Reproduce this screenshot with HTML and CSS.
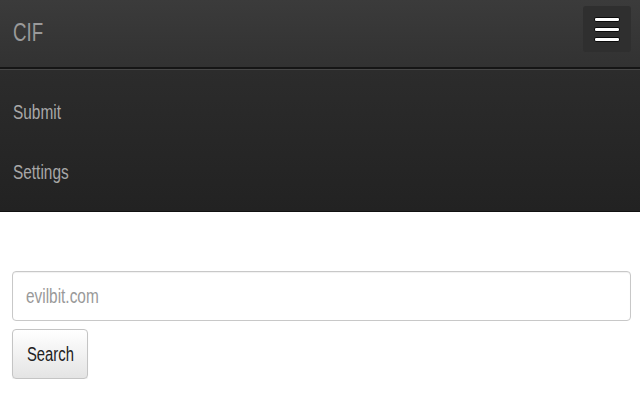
FILE: index.html
```html
<!DOCTYPE html>
<html>
<head>
<meta charset="utf-8">
<link rel="stylesheet" href="styles.css">
</head>
<body>
<header class="navbar">
  <div class="navbar-head">
    <a class="brand"><span class="squeeze">CIF</span></a>
    <button class="toggle" aria-label="menu">
      <span class="bar"></span><span class="bar"></span><span class="bar"></span>
    </button>
  </div>
  <nav class="menu">
    <a class="menu-item"><span class="squeeze">Submit</span></a>
    <a class="menu-item"><span class="squeeze">Settings</span></a>
  </nav>
</header>
<main class="content">
  <form class="search">
    <div class="field"><span class="placeholder squeeze">evilbit.com</span></div>
    <button type="button" class="btn"><span class="squeeze">Search</span></button>
  </form>
</main>
</body>
</html>
```
FILE: styles.css
```css
html, body {
  margin: 0;
  padding: 0;
  background: #fff;
  font-family: "Liberation Sans", Arial, sans-serif;
}
.squeeze {
  display: inline-block;
  transform: scaleX(0.77);
  transform-origin: left center;
  white-space: nowrap;
}
.navbar {
  display: flex;
  flex-direction: column;
}
.navbar-head {
  background: linear-gradient(#3b3b3b, #323232);
  border-bottom: 2px solid #151515;
  display: flex;
  align-items: flex-start;
  justify-content: space-between;
  box-sizing: border-box;
  height: 69px;
}
.brand {
  color: #9a9a9a;
  font-size: 26px;
  line-height: 26px;
  margin: 19px 0 0 13px;
}
.brand .squeeze {
  transform: scaleX(0.72);
}
.toggle {
  width: 48px;
  height: 46px;
  margin: 6px 9px 0 0;
  padding: 0;
  border: none;
  border-radius: 3px;
  background: #2f2f2f;
  display: flex;
  flex-direction: column;
  align-items: center;
  justify-content: center;
  gap: 5px;
}
.bar {
  display: block;
  width: 24px;
  height: 3px;
  background: #fff;
  border: 1px solid #0c0c0c;
  border-radius: 2px;
}
.menu {
  display: flex;
  flex-direction: column;
  background: linear-gradient(#2c2c2c, #222);
  border-top: 1px solid #474747;
  border-bottom: 1px solid #111;
  height: 143px;
  box-sizing: border-box;
  padding-top: 12px;
}
.menu-item {
  color: #a8a8a8;
  font-size: 20px;
  height: 60px;
  line-height: 60px;
  padding-left: 13px;
}
.content {
  padding: 59px 9px 0 12px;
}
.search {
  display: flex;
  flex-direction: column;
  align-items: flex-start;
  gap: 8px;
}
.field {
  width: 100%;
  height: 50px;
  box-sizing: border-box;
  border: 1px solid #c8c8c8;
  border-radius: 4px;
  box-shadow: inset 0 1px 1px rgba(0,0,0,0.06);
  padding-left: 13px;
  display: flex;
  align-items: center;
}
.placeholder {
  color: #999;
  font-size: 20px;
}
.btn {
  width: 76px;
  height: 50px;
  padding: 0 0 0 14px;
  box-sizing: border-box;
  border: 1px solid #c4c4c4;
  border-radius: 4px;
  background: linear-gradient(#fff, #e4e4e4);
  box-shadow: 0 1px 1px rgba(0,0,0,0.08);
  color: #222;
  font-family: "Liberation Sans", Arial, sans-serif;
  font-size: 20px;
  text-align: left;
}
.btn .squeeze {
  transform: scaleX(0.74);
}
```
